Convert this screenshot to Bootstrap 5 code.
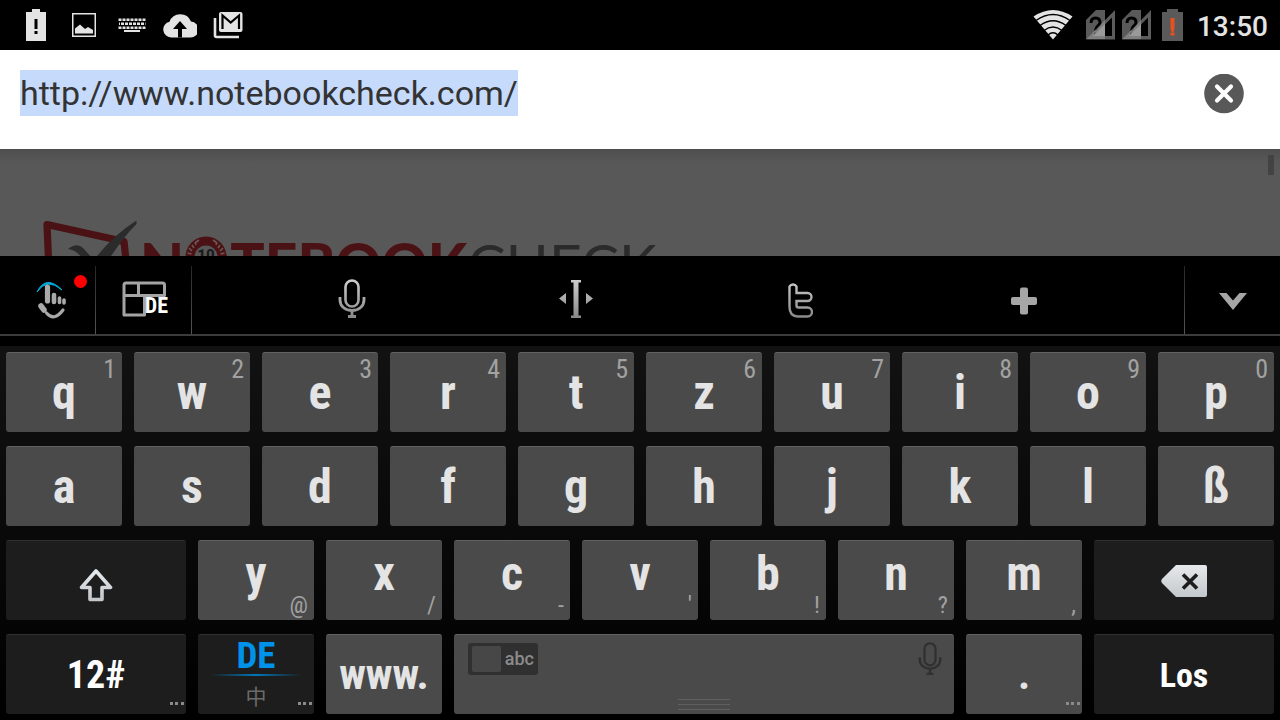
<!DOCTYPE html>
<html lang="de">
<head>
<meta charset="utf-8">
<meta name="viewport" content="width=device-width, initial-scale=1">
<title>notebookcheck.com</title>
<link href="https://cdn.jsdelivr.net/npm/bootstrap@5.3.0/dist/css/bootstrap.min.css" rel="stylesheet">
<style>
body { font-family: Roboto, "Liberation Sans", sans-serif; background: #000; line-height: 1; }
svg { display: block; flex: none; }
button { border: 0; padding: 0; background: none; color: inherit; }

.status-bar { height: 50px; color: #e4e4e4; padding: 0 12px; }
.status-cell { width: 48px; }
.status-right { gap: 4px; }
.clock { font-size: 28px; font-weight: 500; padding-top: 4px; }

.url-bar { height: 99px; padding: 20px 36px 0 20px; background: #fff; }
.url-input { border: 0; outline: 0; padding: 0; height: 46px; line-height: 46px; font-size: 34px; color: #333; background: none; }
.url-input::selection { background: #c6dafc; color: #333; }

.web-page { background: linear-gradient(#4e4e4e, #585858 14px); min-height: 0; }
.scroll-thumb { top: 6px; right: 6px; width: 6px; height: 20px; background: #434343; }
.site-logo { padding: 71px 0 0 42px; color: #2b2b2b; text-decoration: none; }
.site-name { font-family: Lato, "Liberation Sans", sans-serif; font-size: 57px; line-height: 58px; margin-top: 14px; }
.site-name b { font-weight: 900; color: #4a1214; }
.laurel { left: 1px; top: 7px; }

.tool-bar { height: 80px; border-bottom: 2px solid #3c3c3c; background: #000; }
.tool-bar button { padding-top: 8px; }
.tool-item { flex: 1 1 0; }
.tool-side { width: 95px; }
.tool-line { width: 1px; margin-top: 10px; background: linear-gradient(#262626, #555); }
.red-dot { top: 19px; right: 8px; width: 13px; height: 13px; background: #f00; }
.layout-tag { right: 23px; top: 39px; font-size: 22px; color: #fff; }

.cond { font-family: "Roboto Condensed", Roboto, "Liberation Sans Narrow", sans-serif; }
.key-pad { margin-top: 10px; padding: 6px; gap: 14px 12px; display: grid; grid-template-columns: repeat(20, minmax(0, 1fr)); background: linear-gradient(#121212, #000); }
.key { grid-column: span 2; height: 80px; border-radius: 3px; background: #4a4a4a; border-top: 1px solid #626262; color: #e4e4e4; font-size: 48px; font-weight: 700; position: relative; display: flex; align-items: center; justify-content: center; }
.key-wide { grid-column: span 3; }
.key-space { grid-column: span 8; }
.key-dark { background: #1d1d1d; border-top-color: #303030; color: #fff; }
.key-low { padding-bottom: 14px; }
.hint { position: absolute; font-weight: 400; color: #a2a2a2; }
.hint-top { top: 3px; right: 6px; font-size: 26px; }
.hint-low { bottom: 3px; right: 6px; font-size: 24px; }
.hint-more { right: 2px; bottom: 9px; }
.fs-www { font-size: 42px; }
.fs-num { font-size: 38px; }
.fs-go { font-size: 34px; }
.key-lang { padding-bottom: 6px; }
.lang-on { font-size: 37px; color: #0091ea; }
.lang-line { width: 90px; height: 2px; margin: 0 0 9px; background: linear-gradient(90deg, transparent, #0077b8, transparent); }
.lang-off { font-family: "Noto Sans CJK SC", sans-serif; font-size: 21px; font-weight: 400; color: #6a6a6a; }
.abc-switch { left: 14px; top: 8px; width: 70px; height: 32px; border-radius: 3px; background: #303030; color: #8b8b8b; font-family: Roboto, sans-serif; font-size: 18px; font-weight: 500; padding-right: 4px; }
.abc-knob { width: 29px; height: 26px; margin-left: 4px; border-radius: 2px; background: #474747; }
.space-mic { right: 12px; top: 7px; }
.space-grip { bottom: 4px; left: 50%; margin-left: -26px; }
</style>
</head>
<body class="d-flex flex-column vh-100 overflow-hidden">
<svg width="0" height="0" class="position-absolute" aria-hidden="true">
  <defs>
    <linearGradient id="silver" gradientUnits="userSpaceOnUse" x1="0" y1="0" x2="0" y2="40"><stop offset="0" stop-color="#cfcfcf"/><stop offset="1" stop-color="#868686"/></linearGradient>
    <linearGradient id="pale" x1="0" y1="0" x2="0" y2="1"><stop offset="0" stop-color="#e6e9ec"/><stop offset="1" stop-color="#c3c8cc"/></linearGradient>
    <symbol id="sim" viewBox="0 0 32 32">
      <path d="M1 11 11 1H20V30H1Z" fill="#5a5a5a"/>
      <path d="M6 14Q6 9 10.500 9T15 13.500C15 17 10.500 17 10.500 21.500M10.500 23.500V26.500" fill="none" stroke="#000" stroke-width="3"/>
      <path d="M1 30.500 30 1V30.500Z" fill="#999" fill-opacity=".6"/>
      <path d="M20 15.500 27 8.500V27H20Z" fill="#000"/>
      <path d="M8 27 20 15V27Z" fill="#9a9a9a"/>
    </symbol>
    <symbol id="mic" viewBox="0 0 28 40">
      <rect x="7.500" y="1.500" width="13" height="26" rx="6.500" fill="none" stroke-width="2.600"/>
      <path d="M2 18v3c0 6 5 10.500 12 10.500S26 27 26 21v-3M14 32v5M10 37.500h8" fill="none" stroke-width="2.800"/>
    </symbol>
  </defs>
</svg>

<header class="status-bar d-flex align-items-center flex-shrink-0">
  <div class="status-cell d-flex justify-content-center"><svg width="20" height="32" viewBox="0 0 20 32"><path d="M0 3H6V0H14V3H20V32H0Z" fill="#e4e4e4"/><path d="M8.500 10h3v10h-3zM8.500 22h3v3h-3z"/></svg></div>
  <div class="status-cell d-flex justify-content-center"><svg width="24" height="24" viewBox="0 0 24 24"><path d="M.75.75h22.500v22.500H.75Z" fill="none" stroke="#e4e4e4" stroke-width="1.500"/><path d="M3 20.500v-5l5-4 5 4.500 3-2 5 3v3.500Z" fill="#e4e4e4"/></svg></div>
  <div class="status-cell d-flex justify-content-center"><svg width="28" height="15" viewBox="0 0 28 15"><g stroke="#e4e4e4" stroke-width="2.600" fill="none"><path d="M.5 1.800h27" stroke-dasharray="3 1"/><path d="M1 5.800h26.500" stroke-dasharray="3 1" stroke-dashoffset="2"/><path d="M.5 9.800h27" stroke-dasharray="3 1"/><path d="M6 13h16" stroke-width="2"/></g></svg></div>
  <div class="status-cell d-flex justify-content-center"><svg width="34" height="26" viewBox="0 0 34 26"><path d="M8 25.500A8 8 0 0 1 6.500 9.700 11.500 11.500 0 0 1 28 9.500 8 8 0 0 1 27 25.500Z" fill="#e4e4e4"/><path d="M17 9 24 17H19v8.500H15V17H10Z"/></svg></div>
  <div class="status-cell d-flex justify-content-center"><svg width="30" height="28" viewBox="0 0 30 28"><path d="M2 7V24.500Q2 26 3.500 26H26" fill="none" stroke="#e4e4e4" stroke-width="2.600"/><rect x="6" y="1" width="23.500" height="20" rx="2" fill="#e4e4e4"/><path d="M9.500 18V4.500L17.700 11.500 26 4.500V18" fill="none" stroke="#000" stroke-width="2.200"/></svg></div>
  <div class="status-right d-flex align-items-center ms-auto">
    <svg class="me-2" width="40" height="30" viewBox="0 0 40 30"><path d="M.5 6.500Q20-6.500 39.500 6.500L20 29.500Z" fill="#e4e4e4"/><path d="M3 10.500Q20-1.500 37 10.500M7 15.500Q20 6 33 15.500M11 20.500Q20 13.500 29 20.500M15 25Q20 20.500 25 25" fill="none" stroke="#000" stroke-width="1.500"/></svg>
    <svg width="32" height="32"><use href="#sim"/></svg>
    <svg width="32" height="32"><use href="#sim"/></svg>
    <svg class="ms-1" width="24" height="32" viewBox="0 0 24 32"><path d="M1 3H6V0H17V3H22V32H1Z" fill="#5a5a5a"/><path d="M9.500 9h4v11l-1 3h-2l-1-3zM9.500 23.500h4v3h-4z" fill="#e8501e"/></svg>
    <time class="clock ms-2">13:50</time>
  </div>
</header>

<form class="url-bar d-flex align-items-start flex-shrink-0">
  <input id="url" class="url-input flex-grow-1" type="text" aria-label="URL" value="http://www.notebookcheck.com/" spellcheck="false" autocomplete="off">
  <button type="button" aria-label="Löschen" class="mt-1"><svg width="40" height="40" viewBox="0 0 40 40"><circle cx="20" cy="19.500" r="19.800" fill="#585858"/><path d="M13 12.500 27 26.500M27 12.500 13 26.500" stroke="#fff" stroke-width="4.200" stroke-linecap="round"/></svg></button>
</form>

<main class="web-page flex-grow-1 position-relative overflow-hidden">
  <a href="#" class="site-logo d-flex align-items-start">
    <svg width="98" height="50" viewBox="0 0 98 50"><path d="M7 50 5 4.500 82 21.500 85 50" fill="none" stroke="#4a1214" stroke-width="7.200" stroke-linejoin="round"/><path d="M26 29Q35 22 41 28L52 40Q70 16 94.500 .5L94.500 4Q80 18 60 50H47Q38 30 26 29Z" fill="#2b2b2b"/></svg>
    <span class="site-name text-nowrap"><b>N<span class="position-relative">O<svg class="laurel position-absolute" width="42" height="42" viewBox="0 0 42 42"><circle cx="21" cy="21" r="20.500" fill="#4a1214"/><circle cx="21" cy="21" r="11.500" fill="#585858"/><path d="M14 4l-4 3M10 6l1 3M7 9l2 3M4 12l3 3M2.500 17l4 1M28 4l4 3M32 6l-1 3M35 9l-2 3M38 12l-3 3M39.500 17l-4 1" stroke="#6e5556" stroke-width="1.600"/><text x="21" y="24" text-anchor="middle" font-family="Roboto, sans-serif" font-size="15" fill="#1c1c1c">10</text></svg></span>TEBOOK</b>CHECK</span>
  </a>
  <div class="scroll-thumb position-absolute"></div>
</main>

<section class="flex-shrink-0">
  <nav class="tool-bar d-flex">
    <button type="button" class="tool-side position-relative" aria-label="TouchPal"><svg class="mx-auto" width="40" height="44" viewBox="-4 0 40 44"><path d="M5 15Q14-3 30 13 15 0 5 15Z" fill="#00aee0" stroke="#00aee0" stroke-width="1"/><g fill="none" stroke="#a9a9a9" stroke-linecap="round"><path d="M15.500 10V24" stroke-width="5.200"/><path d="M22 18V25" stroke-width="4.600"/><path d="M27.500 21V25.500M32 23V26" stroke-width="3.600"/><path d="M9 29 12 33" stroke-width="5.500"/><path d="M14.500 36Q22 45 31 33" stroke-width="3.200"/></g></svg><span class="red-dot position-absolute rounded-circle"></span></button>
    <div class="tool-line"></div>
    <button type="button" class="tool-side position-relative" aria-label="Layout DE"><svg class="mx-auto" width="44" height="36" viewBox="0 0 44 36"><path d="M24 14.500H42.500V4Q42.500 2 40.500 2H4Q2 2 2 4V34H22.500V14.500H2M16.500 2V14.500H24" fill="none" stroke="#a4a4a4" stroke-width="3" stroke-linejoin="round"/></svg><span class="layout-tag cond position-absolute fw-bold">DE</span></button>
    <div class="tool-line"></div>
    <div class="d-flex flex-grow-1 px-5">
      <button type="button" class="tool-item" aria-label="Spracheingabe"><svg class="mx-auto" width="28" height="40" stroke="url(#silver)"><use href="#mic"/></svg></button>
      <button type="button" class="tool-item" aria-label="Cursor"><svg class="mx-auto" width="36" height="40" viewBox="0 0 36 40"><path d="M13 1H23V3.500H20.500V36.500H23V39H13V36.500H15.500V3.500H13ZM1 19.500 8 14V25ZM35 19.500 28 14V25Z" fill="url(#silver)"/></svg></button>
      <button type="button" class="tool-item" aria-label="Twitter"><svg class="mx-auto" width="26" height="40" viewBox="0 0 26 40"><path d="M2.500 7.500A4 4 0 0 1 9.500 7.500V14H20.500A3.800 3.800 0 0 1 20.500 22H9.500V26.500Q9.500 28.500 11.500 28.500H20.500A3.800 3.800 0 0 1 20.500 37.500H10.500Q2.500 37 2.500 28Z" fill="none" stroke="url(#silver)" stroke-width="2.400"/></svg></button>
      <button type="button" class="tool-item" aria-label="Mehr"><svg class="mx-auto mt-1" width="28" height="28" viewBox="0 0 28 28"><g fill="#a6a6a6"><rect x="10" y="0.500" width="8" height="27" rx="2"/><rect x="1" y="10" width="26" height="8" rx="2"/></g></svg></button>
    </div>
    <div class="tool-line"></div>
    <button type="button" class="tool-side" aria-label="Ausblenden"><svg class="mx-auto mt-1" width="28" height="17" viewBox="0 0 28 17"><path d="M0 0H7.500L14 7.500 20.500 0H28L14 17Z" fill="#a6a6a6"/></svg></button>
  </nav>

  <div class="key-pad cond">
    <button type="button" class="key">q<span class="hint hint-top">1</span></button>
    <button type="button" class="key">w<span class="hint hint-top">2</span></button>
    <button type="button" class="key">e<span class="hint hint-top">3</span></button>
    <button type="button" class="key">r<span class="hint hint-top">4</span></button>
    <button type="button" class="key">t<span class="hint hint-top">5</span></button>
    <button type="button" class="key">z<span class="hint hint-top">6</span></button>
    <button type="button" class="key">u<span class="hint hint-top">7</span></button>
    <button type="button" class="key">i<span class="hint hint-top">8</span></button>
    <button type="button" class="key">o<span class="hint hint-top">9</span></button>
    <button type="button" class="key">p<span class="hint hint-top">0</span></button>

    <button type="button" class="key">a</button>
    <button type="button" class="key">s</button>
    <button type="button" class="key">d</button>
    <button type="button" class="key">f</button>
    <button type="button" class="key">g</button>
    <button type="button" class="key">h</button>
    <button type="button" class="key">j</button>
    <button type="button" class="key">k</button>
    <button type="button" class="key">l</button>
    <button type="button" class="key">ß</button>

    <button type="button" class="key key-wide key-dark" aria-label="Umschalt"><svg class="mt-2" width="34" height="34" viewBox="0 0 34 34"><path d="M17 3 31.500 19.500H23V31.500H11V19.500H2.500Z" fill="none" stroke="url(#pale)" stroke-width="3.600" stroke-linejoin="round"/></svg></button>
    <button type="button" class="key key-low">y<span class="hint hint-low">@</span></button>
    <button type="button" class="key key-low">x<span class="hint hint-low">/</span></button>
    <button type="button" class="key key-low">c<span class="hint hint-low">-</span></button>
    <button type="button" class="key key-low">v<span class="hint hint-low">'</span></button>
    <button type="button" class="key key-low">b<span class="hint hint-low">!</span></button>
    <button type="button" class="key key-low">n<span class="hint hint-low">?</span></button>
    <button type="button" class="key key-low">m<span class="hint hint-low">,</span></button>
    <button type="button" class="key key-wide key-dark" aria-label="Rücktaste"><svg width="46" height="34" viewBox="0 0 46 34"><path d="M15 1H44Q46 1 46 3V31Q46 33 44 33H15L1 19Q-.5 17 1 15Z" fill="url(#pale)"/><path d="M22 10.500 36 24.500M36 10.500 22 24.500" stroke="#1d1d1d" stroke-width="3.600"/></svg></button>

    <button type="button" class="key key-wide key-dark fs-num">12#<svg class="hint hint-more" width="14" height="3" fill="#8a8a8a"><path d="M0 0h3v3H0zM5 0h3v3H5zM11 0h3v3h-3z"/></svg></button>
    <button type="button" class="key key-dark key-lang flex-column"><span class="lang-on">DE</span><span class="lang-line"></span><span class="lang-off">中</span><svg class="hint hint-more" width="14" height="3" fill="#8a8a8a"><path d="M0 0h3v3H0zM5 0h3v3H5zM11 0h3v3h-3z"/></svg></button>
    <button type="button" class="key fs-www">www.</button>
    <button type="button" class="key key-space" aria-label="Leertaste">
      <span class="abc-switch position-absolute d-flex align-items-center justify-content-between"><span class="abc-knob"></span>abc</span>
      <svg class="space-mic position-absolute" width="24" height="34" viewBox="0 0 28 40" stroke="#303030"><use href="#mic" width="28" height="40"/></svg>
      <svg class="space-grip position-absolute" width="52" height="11" stroke="#606060"><path d="M0 .5h52M0 5.500h52M0 10.500h52"/></svg>
    </button>
    <button type="button" class="key fs-www">.<svg class="hint hint-more" width="14" height="3" fill="#8a8a8a"><path d="M0 0h3v3H0zM5 0h3v3H5zM11 0h3v3h-3z"/></svg></button>
    <button type="button" class="key key-wide key-dark fs-go">Los</button>
  </div>
</section>
<script src="https://cdn.jsdelivr.net/npm/bootstrap@5.3.0/dist/js/bootstrap.bundle.min.js"></script>
<script>
  const url = document.getElementById('url');
  url.focus();
  url.select();
</script>
</body>
</html>
